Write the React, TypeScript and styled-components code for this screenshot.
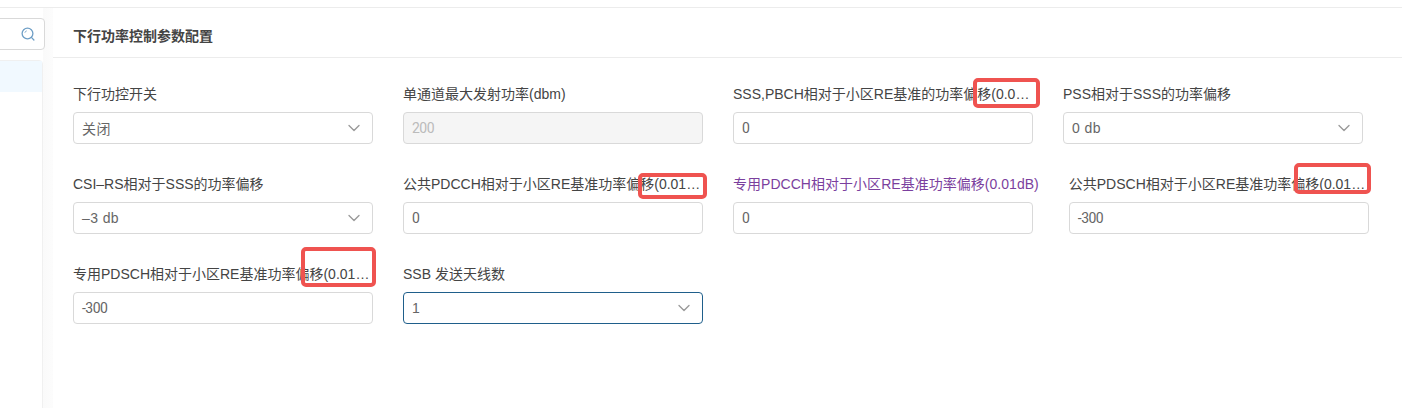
import { createGlobalStyle, styled } from 'styled-components'
import { ChevronDown } from 'lucide-react'

const GlobalStyle = createGlobalStyle`
  html, body {
    margin: 0;
    padding: 0;
    background: #fff;
  }
  body {
    font-family: "Liberation Sans", "Noto Sans CJK SC", sans-serif;
    overflow: hidden;
  }
`

type FieldDef = {
  label: string
  value: string
  kind: 'select' | 'input' | 'disabled' | 'focused'
  purple?: boolean
  free?: boolean
  mark?: { left: number; top: number; width: number; height: number }
}

const fields: FieldDef[] = [
  { label: '下行功控开关', value: '关闭', kind: 'select' },
  { label: '单通道最大发射功率(dbm)', value: '200', kind: 'disabled' },
  {
    label: 'SSS,PBCH相对于小区RE基准的功率偏移(0.01dB)',
    value: '0',
    kind: 'input',
    mark: { left: 240, top: -4, width: 67, height: 30 },
  },
  { label: 'PSS相对于SSS的功率偏移', value: '0 db', kind: 'select' },
  { label: 'CSI–RS相对于SSS的功率偏移', value: '–3 db', kind: 'select' },
  {
    label: '公共PDCCH相对于小区RE基准功率偏移(0.01dB)',
    value: '0',
    kind: 'input',
    mark: { left: 235, top: 1, width: 69, height: 26 },
  },
  { label: '专用PDCCH相对于小区RE基准功率偏移(0.01dB)', value: '0', kind: 'input', purple: true, free: true },
  {
    label: '公共PDSCH相对于小区RE基准功率偏移(0.01dB)',
    value: '-300',
    kind: 'input',
    mark: { left: 225, top: -9, width: 77, height: 31 },
  },
  {
    label: '专用PDSCH相对于小区RE基准功率偏移(0.01dB)',
    value: '-300',
    kind: 'input',
    mark: { left: 228, top: -15, width: 75, height: 40 },
  },
  { label: 'SSB 发送天线数', value: '1', kind: 'focused' },
]

function SearchIcon() {
  return (
    <svg width="14" height="14" viewBox="0 0 14 14" fill="none" stroke="#6f9fc6" strokeWidth="1.3">
      <circle cx="6.5" cy="6.5" r="5.4" />
      <path d="M10.4 10.4 L12.9 13" strokeLinecap="round" />
      <path d="M3.9 5.6 A2.8 2.8 0 0 1 5.6 3.9" strokeWidth="1" />
    </svg>
  )
}

function App() {
  return (
    <>
      <GlobalStyle />
      <Page>
        <Sidebar>
          <SearchBox>
            <SearchIcon />
          </SearchBox>
          <TreePanel>
            <TreeActive />
          </TreePanel>
        </Sidebar>
        <Main>
          <Header>下行功率控制参数配置</Header>
          <Form>
            {fields.map((f) => (
              <Field key={f.label} $free={f.free}>
                <Label $purple={f.purple} $free={f.free}>
                  {f.label}
                </Label>
                <Control $kind={f.kind}>
                  <span>{f.value}</span>
                  {(f.kind === 'select' || f.kind === 'focused') && <ChevronDown size={20} color="#999" strokeWidth={1.6} />}
                </Control>
                {f.mark && (
                  <Mark
                    style={{ left: f.mark.left, top: f.mark.top, width: f.mark.width, height: f.mark.height }}
                  />
                )}
              </Field>
            ))}
          </Form>
        </Main>
      </Page>
    </>
  )
}
export default App

const Page = styled.div`
  width: 1402px;
  height: 408px;
  box-sizing: border-box;
  display: flex;
  padding-top: 7px;
  overflow: hidden;
  background: #fff;
`

const Sidebar = styled.div`
  width: 53px;
  flex: none;
  box-sizing: border-box;
  border-top: 1px solid #ececec;
  padding-top: 10px;
  background: linear-gradient(to right, #fff 0, #fff 43px, #fafafa 43px, #fcfcfc 53px);
  overflow: hidden;
`

const SearchBox = styled.div`
  width: 65px;
  height: 32px;
  margin-left: -20px;
  box-sizing: border-box;
  border: 1px solid #d9d9d9;
  border-radius: 4px;
  background: #fff;
  display: flex;
  align-items: center;
  justify-content: flex-end;
  padding-right: 9px;
`

const TreePanel = styled.div`
  width: 60px;
  height: 400px;
  margin: 10px 0 0 -17px;
  box-sizing: border-box;
  border: 1px solid #f0f0f0;
  border-radius: 4px;
  background: #fff;
`

const TreeActive = styled.div`
  height: 31px;
  background: #f1f9ff;
`

const Main = styled.div`
  flex: 1;
  min-width: 0;
  border-top: 1px solid #ececec;
`

const Header = styled.div`
  height: 50px;
  box-sizing: border-box;
  padding: 0 20px;
  line-height: 56px;
  border-bottom: 1px solid #ececec;
  font-size: 14px;
  font-weight: 700;
  color: #444;
`

const Form = styled.div`
  display: flex;
  flex-wrap: wrap;
  gap: 28px 30px;
  padding: 24px 20px 0;
`

const Field = styled.div<{ $free?: boolean }>`
  position: relative;
  width: ${({ $free }) => ($free ? 'max-content' : '300px')};
`

const Label = styled.div<{ $purple?: boolean; $free?: boolean }>`
  height: 23px;
  line-height: 24px;
  margin-bottom: 7px;
  font-size: 14px;
  letter-spacing: ${({ $free }) => ($free ? '0.03px' : '0')};
  color: ${({ $purple }) => ($purple ? '#7b3f9e' : '#444')};
  white-space: nowrap;
  overflow: ${({ $free }) => ($free ? 'visible' : 'hidden')};
  text-overflow: ellipsis;
`

const isTyped = (kind: string) => kind === 'input' || kind === 'disabled'

const Control = styled.div<{ $kind: string }>`
  width: 300px;
  height: 32px;
  box-sizing: border-box;
  display: flex;
  align-items: center;
  justify-content: space-between;
  padding: 0 8px 0 8px;
  border: 1px solid ${({ $kind }) => ($kind === 'focused' ? '#1f5f8b' : '#d9d9d9')};
  border-radius: 4px;
  background: ${({ $kind }) => ($kind === 'disabled' ? '#f5f5f5' : '#fff')};
  color: ${({ $kind }) => ($kind === 'disabled' ? '#bbb' : '#666')};
  font-size: 14px;
  font-family: ${({ $kind }) => (isTyped($kind) ? 'Roboto, sans-serif' : 'inherit')};
  letter-spacing: ${({ $kind }) => (isTyped($kind) ? '-0.5px' : $kind === 'select' ? '0.4px' : '0')};
`

const Mark = styled.div`
  position: absolute;
  box-sizing: border-box;
  border: 4px solid #ef5350;
  border-radius: 5px;
  pointer-events: none;
`
